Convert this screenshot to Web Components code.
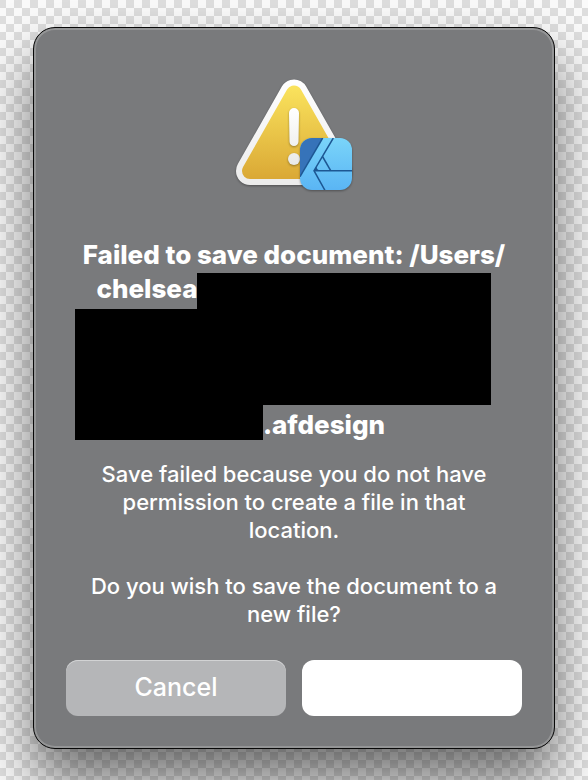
<!DOCTYPE html>
<html lang="en">
<head>
<meta charset="utf-8">
<meta name="viewport" content="width=device-width, initial-scale=1">
<title>Failed to save document</title>
<style>
    html {
        min-height: 100%;
        background: repeating-conic-gradient(#dedede 0 25%, #fafafa 0 50%) 6px 0 / 16px 16px;
    }
    body {
        margin: 0;
        padding: 27px 33px 31px;
        font-family: Inter, "Liberation Sans", sans-serif;
        overflow: hidden;
    }
</style>
</head>
<body>
<alert-dialog>
    <warning-icon slot="icon"></warning-icon>
    <redacted-title slot="title"></redacted-title>
    <p slot="message">Save failed because you do not have permission to create a file in that location.</p>
    <p slot="message">Do you wish to save the document to a new file?</p>
    <dialog-button slot="actions">Cancel</dialog-button>
    <dialog-button slot="actions" primary label="Save to a new file"></dialog-button>
</alert-dialog>

<script>
class AlertDialog extends HTMLElement {
    constructor() {
        super();
        this.attachShadow({ mode: 'open' });
        this.shadowRoot.innerHTML = `
            <style>
            :host {
                display: block;
                color: #fff;
            }
            section {
                display: flex;
                flex-direction: column;
                padding: 50px 32px 32px;
                border: 1px solid #080808;
                border-radius: 22px;
                background: #797a7c;
                box-shadow: inset 0 0 0 2px #949596, 0 32px 56px rgba(0, 0, 0, 0.55);
            }
            .icon {
                display: flex;
                justify-content: center;
                margin-bottom: 44px;
            }
            .message {
                display: flex;
                flex-direction: column;
                gap: 28px;
                margin: 18px 0 32px;
                padding: 0 20px;
                font-size: 22px;
                font-weight: 500;
                line-height: 28px;
                text-align: center;
            }
            ::slotted(p) {
                margin: 0;
            }
            .actions {
                display: grid;
                grid-template-columns: 1fr 1fr;
                gap: 16px;
            }
            </style>
            <section role="alertdialog">
                <div class="icon"><slot name="icon"></slot></div>
                <slot name="title"></slot>
                <div class="message"><slot name="message"></slot></div>
                <div class="actions"><slot name="actions"></slot></div>
            </section>
        `;
    }
}

class WarningIcon extends HTMLElement {
    constructor() {
        super();
        this.attachShadow({ mode: 'open' });
        this.shadowRoot.innerHTML = `
            <style>
            :host {
                display: block;
            }
            svg {
                display: block;
                overflow: visible;
            }
            .sign {
                filter: drop-shadow(0 1px 1px rgba(0, 0, 0, 0.35));
            }
            </style>
            <svg width="120" height="116" viewBox="0 0 120 116" aria-hidden="true">
                <defs>
                    <linearGradient id="rim" x1="0" y1="0" x2="0" y2="108" gradientUnits="userSpaceOnUse">
                        <stop offset="0" stop-color="#fff"/>
                        <stop offset="1" stop-color="#ebebeb"/>
                    </linearGradient>
                    <linearGradient id="gold" x1="0" y1="8" x2="0" y2="101" gradientUnits="userSpaceOnUse">
                        <stop offset="0" stop-color="#fae35d"/>
                        <stop offset="1" stop-color="#daa835"/>
                    </linearGradient>
                    <linearGradient id="mark" x1="0" y1="30" x2="0" y2="88" gradientUnits="userSpaceOnUse">
                        <stop offset="0" stop-color="#fff"/>
                        <stop offset="1" stop-color="#e9e9e7"/>
                    </linearGradient>
                    <linearGradient id="sky" x1="0" y1="0" x2="0" y2="1">
                        <stop offset="0" stop-color="#7ad4f9"/>
                        <stop offset="1" stop-color="#5ab5f4"/>
                    </linearGradient>
                    <clipPath id="tile"><rect x="66" y="60" width="52" height="52" rx="12"/></clipPath>
                </defs>
                <g class="sign" stroke-linejoin="round">
                    <path d="M60 15.5 104 93H16Z" fill="url(#rim)" stroke="url(#rim)" stroke-width="28"/>
                    <path d="M60 15.5 104 93H16Z" fill="url(#gold)" stroke="url(#gold)" stroke-width="16"/>
                </g>
                <g class="sign" fill="url(#mark)">
                    <path d="M55 35a5 5 0 0 1 10 0L64.500 63.500a4.500 4.500 0 0 1-9 0Z"/>
                    <circle cx="60" cy="81" r="6"/>
                </g>
                <g class="sign">
                    <g clip-path="url(#tile)">
                        <rect x="66" y="60" width="52" height="52" fill="url(#sky)"/>
                        <path d="M66 60H88.700L66 98.700Z" fill="#3673b9"/>
                        <g fill="none" stroke="#1d5793" stroke-width="1.500">
                            <path d="M88.700 60 66 98.700"/>
                            <path d="M99.300 60 80 92.700 91.300 113"/>
                            <path d="M80 92.700H118"/>
                            <path d="M88.500 78.500 96.700 92.700"/>
                        </g>
                        <path d="M80 92.700 82.500 88.500C82.500 91 84 92 86 92.700Z" fill="#1d5793"/>
                    </g>
                </g>
            </svg>
        `;
    }
}

class RedactedTitle extends HTMLElement {
    constructor() {
        super();
        this.attachShadow({ mode: 'open' });
        this.shadowRoot.innerHTML = `
            <style>
            :host {
                display: block;
            }
            h1 {
                position: relative;
                width: 440px;
                max-width: 100%;
                margin: 0 auto;
                font-size: 26px;
                font-weight: 800;
                line-height: 34px;
                text-align: center;
            }
            .line {
                display: block;
                min-height: 34px;
                white-space: nowrap;
            }
            .gap {
                display: inline-block;
                width: 294px;
            }
            .gap.short {
                width: 60px;
            }
            /* blacked-out part of the path, laid over the lines */
            .bar {
                position: absolute;
                background: #000;
            }
            .upper {
                top: 35px;
                left: 123px;
                width: 294px;
                height: 132px;
            }
            .lower {
                top: 71px;
                left: 1px;
                width: 188px;
                height: 131px;
            }
            </style>
            <h1>
                <span class="line">Failed to save document: /Users/</span>
                <span class="line">chelsea<span class="gap"></span></span>
                <span class="line"></span>
                <span class="line"></span>
                <span class="line"></span>
                <span class="line"><span class="gap short"></span>.afdesign</span>
                <span class="bar upper"></span>
                <span class="bar lower"></span>
            </h1>
        `;
    }
}

class DialogButton extends HTMLElement {
    constructor() {
        super();
        this.attachShadow({ mode: 'open' });
        this.shadowRoot.innerHTML = `
            <style>
            :host {
                display: block;
            }
            button {
                display: block;
                width: 100%;
                height: 56px;
                padding: 0 0 2px;
                border: none;
                border-radius: 12px;
                background: #b5b6b8;
                box-shadow: inset 0 1px 0 #d2d3d4;
                color: #fff;
                font-family: inherit;
                font-size: 25px;
                font-weight: 500;
                line-height: 32px;
            }
            :host([primary]) button {
                background: #fff;
                box-shadow: none;
            }
            </style>
            <button type="button"><slot></slot></button>
        `;
    }
    connectedCallback() {
        if (this.hasAttribute('label')) {
            this.shadowRoot.querySelector('button').setAttribute('aria-label', this.getAttribute('label'));
        }
    }
}

customElements.define('alert-dialog', AlertDialog);
customElements.define('warning-icon', WarningIcon);
customElements.define('redacted-title', RedactedTitle);
customElements.define('dialog-button', DialogButton);
</script>
</body>
</html>
